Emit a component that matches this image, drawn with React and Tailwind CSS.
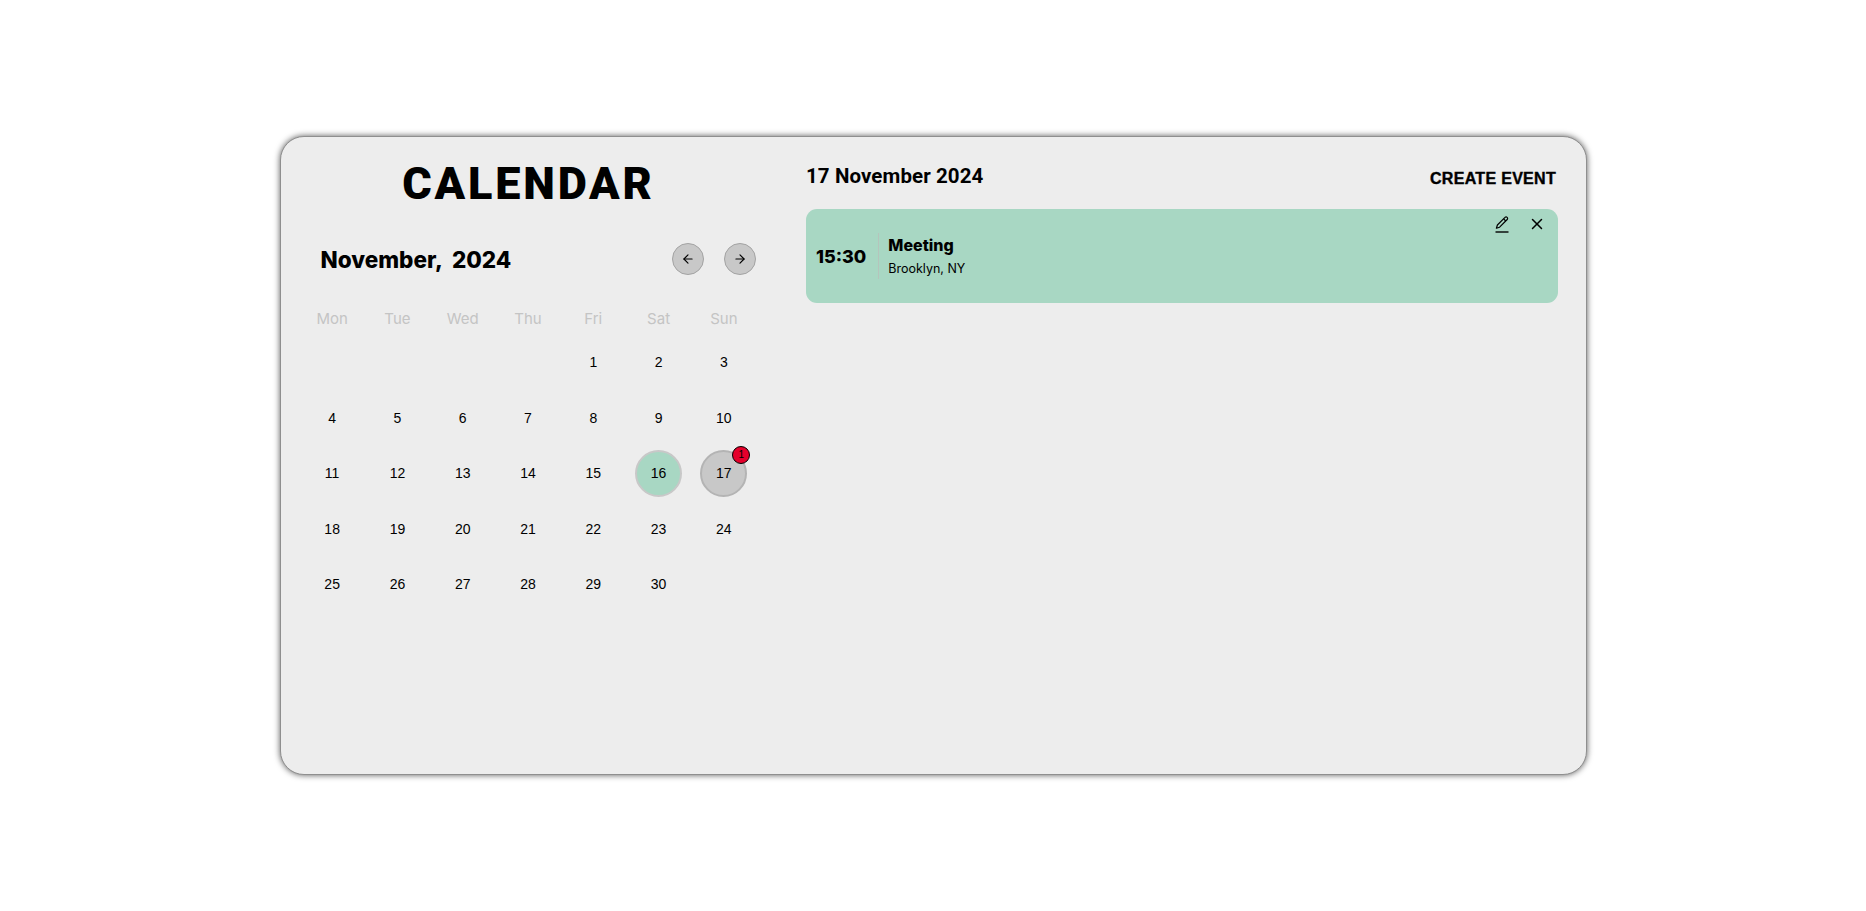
import React from 'react';
import { ArrowLeft, ArrowRight, X } from 'lucide-react';

const weekDays = ['Mon', 'Tue', 'Wed', 'Thu', 'Fri', 'Sat', 'Sun'];
const days = Array.from({ length: 30 }, (_, i) => i + 1);

const NavButton = ({ children }) => (
  <button className="w-8 h-8 rounded-full bg-[#c8c8c8] border border-[#a3a3a3] flex items-center justify-center text-black">
    {children}
  </button>
);

const EditIcon = () => (
  <svg width="14" height="17" viewBox="0 0 14 17" fill="none" stroke="currentColor" strokeWidth="1.2" strokeLinejoin="round">
    <path d="M10 1.4a1.5 1.5 0 0 1 2.2 2.1L4.6 11.2 1.4 12.2 2.4 9Z" />
    <path d="M8.6 2.8l2.2 2.2" />
    <path d="M0.5 16h13" strokeWidth="1.4" />
  </svg>
);

const DayCell = ({ day }) => {
  const isSelected = day === 17;
  const isToday = day === 16;
  return (
    <div className="h-[55.4px] flex items-center justify-center">
      <div
        className={`relative w-[47px] h-[47px] rounded-full flex items-center justify-center text-[14px] text-black ${
          isToday ? 'bg-[#a8d7c3] border-2 border-[#c8c8c8]' : ''
        } ${isSelected ? 'bg-[#c8c8c8] border-2 border-[#b4b4b4]' : ''}`}
      >
        {day}
        {isSelected && (
          <span className="absolute -top-[6px] -right-[5px] w-[18px] h-[18px] rounded-full bg-[#e4002b] border border-black flex items-center justify-center text-[10px] leading-none text-black">
            1
          </span>
        )}
      </div>
    </div>
  );
};

const App = () => {
  return (
    <div className="w-full h-[911px] bg-white flex items-center justify-center font-['Liberation_Sans',sans-serif]">
      <div className="w-[1307px] h-[639px] bg-[#ededed] rounded-[24px] border border-[#8f8f8f] shadow-[0_0_6px_rgba(0,0,0,0.65)] flex">
        {/* left side */}
        <div className="w-[525.5px] pl-[19px] pr-[49.5px] flex flex-col">
          <h1 className="mt-[23px] pl-[1px] text-center text-[45px] leading-[48px] tracking-[2.8px] font-black text-black font-['Roboto',sans-serif]">
            CALENDAR
          </h1>
          <div className="mt-[34.5px] pl-[21px] pr-[1px] flex items-center justify-between">
            <h2 className="text-[22.5px] font-extrabold text-black [word-spacing:5px] font-['Inter',sans-serif]">November, 2024</h2>
            <div className="flex gap-[20px]">
              <NavButton><ArrowLeft size={14} strokeWidth={2} /></NavButton>
              <NavButton><ArrowRight size={14} strokeWidth={2} /></NavButton>
            </div>
          </div>
          <div className="mt-[30.5px] grid grid-cols-7 text-center text-[15px] text-[#c4c4c4] font-['Inter',sans-serif]">
            {weekDays.map((d) => (
              <div key={d} className="h-[24px] leading-[24px]">{d}</div>
            ))}
          </div>
          <div className="mt-[4.5px] grid grid-cols-7">
            {Array.from({ length: 4 }).map((_, i) => (
              <div key={i} className="h-[55.4px]" />
            ))}
            {days.map((d) => (
              <DayCell key={d} day={d} />
            ))}
          </div>
        </div>

        {/* right side */}
        <div className="flex-1 pr-[27.5px] pt-[24px]">
          <div className="flex items-start justify-between">
            <h3 className="text-[20.5px] font-bold tracking-[0.1px] text-black font-['Roboto',sans-serif]">17 November 2024</h3>
            <button className="mt-[5.5px] mr-[2px] text-[16px] font-black text-black tracking-[0.3px] [-webkit-text-stroke:0.4px_black]">CREATE EVENT</button>
          </div>
          <div className="relative mt-[17.5px] h-[94px] rounded-[11px] bg-[#a8d7c3] flex items-center pl-[10px]">
            <span className="text-[18px] font-extrabold text-black font-['Inter',sans-serif]">15:30</span>
            <div className="ml-[12px] mr-[9px] w-px h-[46px] bg-[#b5c4bc]" />
            <div className="flex flex-col font-['Inter',sans-serif]">
              <span className="text-[16px] font-extrabold leading-[22px] text-black">Meeting</span>
              <span className="mt-[3px] text-[12.5px] leading-[20px] text-black">Brooklyn, NY</span>
            </div>
            <div className="absolute top-[6px] right-[12px] flex items-center gap-[19px] text-black">
              <EditIcon />
              <X size={18} strokeWidth={2} />
            </div>
          </div>
        </div>
      </div>
    </div>
  );
};

export default App;
